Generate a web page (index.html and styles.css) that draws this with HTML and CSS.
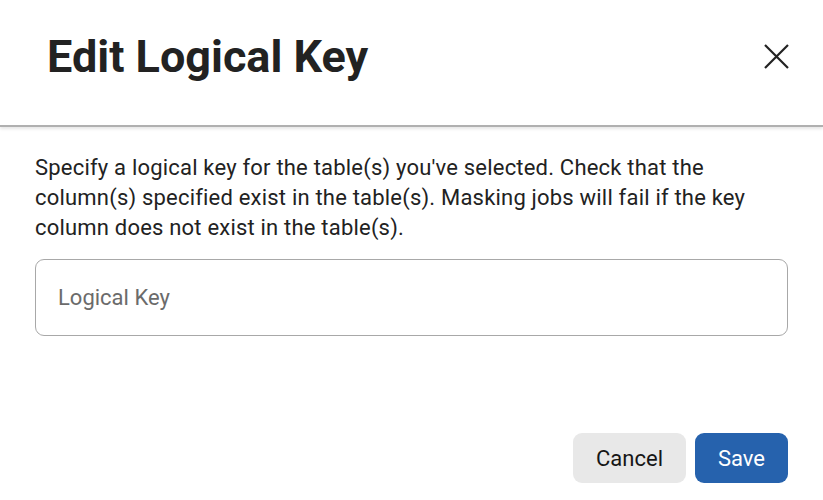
FILE: index.html
```html
<!DOCTYPE html>
<html>
<head>
<meta charset="utf-8">
<link rel="stylesheet" href="styles.css">
</head>
<body>
<div class="dialog">
  <header class="header">
    <h1 class="title">Edit Logical Key</h1>
    <button class="close" aria-label="Close">
      <svg width="25" height="25" viewBox="0 0 25 25"><path d="M1 1 L24 24 M24 1 L1 24" stroke="#222" stroke-width="2.2" fill="none"/></svg>
    </button>
  </header>
  <div class="content">
    <p class="desc">Specify a logical key for the table(s) you've selected. Check that the column(s) specified exist in the table(s). Masking jobs will fail if the key column does not exist in the table(s).</p>
    <input class="field" type="text" placeholder="Logical Key">
  </div>
  <footer class="actions">
    <button class="btn btn-cancel">Cancel</button>
    <button class="btn btn-save">Save</button>
  </footer>
</div>
</body>
</html>
```
FILE: styles.css
```css
* { box-sizing: border-box; }
html, body { margin: 0; padding: 0; background: #fff; }
body { font-family: Roboto, "Liberation Sans", sans-serif; color: #222; width: 823px; height: 500px; overflow: hidden; }
.dialog { display: flex; flex-direction: column; height: 500px; }
.header {
  height: 127px;
  display: flex;
  align-items: center;
  justify-content: space-between;
  padding: 0 34px 12px 47px;
  border-bottom: 2px solid #b0b0b0;
  box-shadow: 0 2px 3px rgba(0,0,0,0.10);
}
.title { margin: 0; font-size: 45px; font-weight: 700; color: #222; line-height: 1.2; }
.close { background: none; border: 0; padding: 0; width: 25px; height: 25px; cursor: pointer; display: flex; }
.content { padding: 26px 35px 0 35px; }
.desc { margin: 0; font-size: 22px; line-height: 30px; color: #222; letter-spacing: 0.2px; }
.field {
  display: block;
  width: 100%;
  height: 77px;
  margin-top: 16px;
  border: 1.5px solid #a8a8a8;
  border-radius: 9px;
  padding: 0 22px;
  font-family: Roboto, sans-serif;
  font-size: 22px;
  color: #222;
  outline: none;
}
.field::placeholder { color: #6b6b6b; }
.actions { margin-top: auto; display: flex; justify-content: flex-end; gap: 9px; padding: 0 35px 17px; }
.btn { height: 50px; border: 0; border-radius: 9px; font-family: Roboto, sans-serif; font-size: 22px; padding: 0; }
.btn-cancel { width: 113px; background: #e8e8e8; color: #161616; }
.btn-save { width: 93px; background: #2662ad; color: #fff; }
```
